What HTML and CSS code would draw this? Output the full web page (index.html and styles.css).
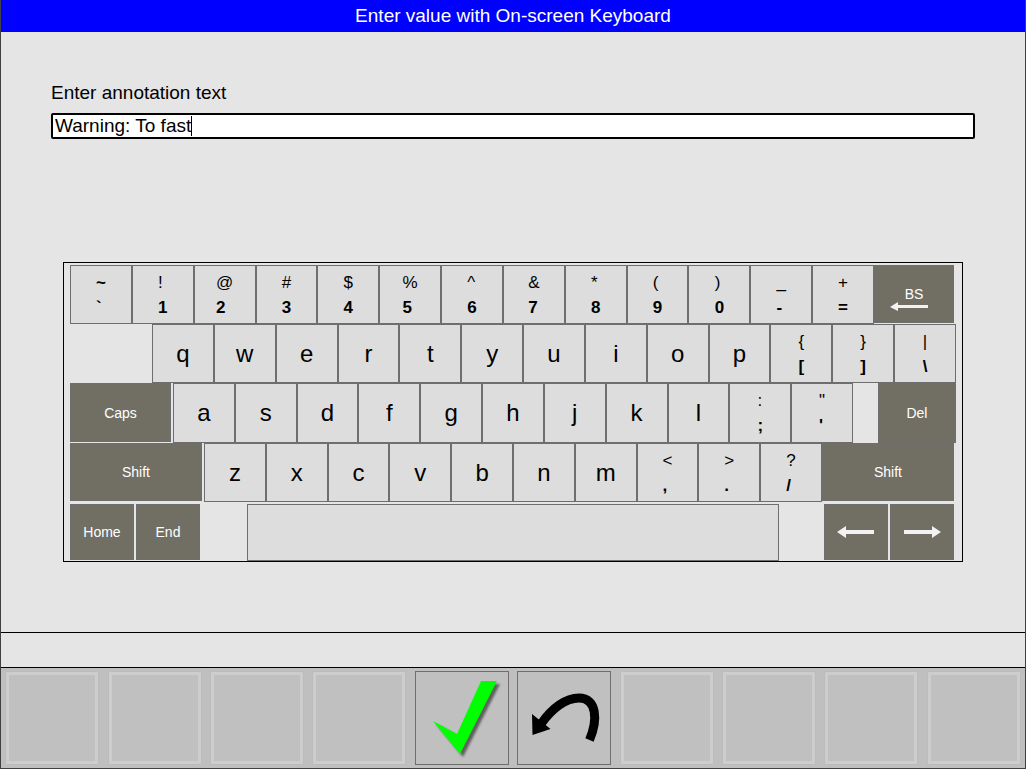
FILE: index.html
```
<!DOCTYPE html>
<html lang="en">
  <head>
    <meta charset="UTF-8" />
    <meta name="viewport" content="width=device-width, initial-scale=1.0" />
    <title>Enter value with On-screen Keyboard</title>
    <link rel="stylesheet" href="styles.css">
  </head>
  <body>
    <header class="title-bar">
      <h1>Enter value with On-screen Keyboard</h1>
    </header>

    <main>
      <label for="annotation">Enter annotation text</label>
      <div class="field">
        <input type="text" id="annotation" value="Warning: To fast" />
        <span class="caret"></span>
      </div>

      <div class="keyboard">
        <div class="row row-numbers">
          <button class="key dual"><span><b>~</b><b>`</b></span></button>
          <button class="key dual"><span><i>!</i><b>1</b></span></button>
          <button class="key dual"><span><i>@</i><b>2</b></span></button>
          <button class="key dual"><span><i>#</i><b>3</b></span></button>
          <button class="key dual"><span><i>$</i><b>4</b></span></button>
          <button class="key dual"><span><i>%</i><b>5</b></span></button>
          <button class="key dual"><span><i>^</i><b>6</b></span></button>
          <button class="key dual"><span><i>&amp;</i><b>7</b></span></button>
          <button class="key dual"><span><i>*</i><b>8</b></span></button>
          <button class="key dual"><span><i>(</i><b>9</b></span></button>
          <button class="key dual"><span><i>)</i><b>0</b></span></button>
          <button class="key dual"><span><i>_</i><b>-</b></span></button>
          <button class="key dual"><span><i>+</i><b>=</b></span></button>
          <button class="special backspace">
            BS
            <svg class="arrow" viewBox="0 0 38 10"><path d="M0 5 L8 0 V3 H38 V6 H8 V9 Z" /></svg>
          </button>
        </div>
        <div class="row row-top">
          <button class="key">q</button>
          <button class="key">w</button>
          <button class="key">e</button>
          <button class="key">r</button>
          <button class="key">t</button>
          <button class="key">y</button>
          <button class="key">u</button>
          <button class="key">i</button>
          <button class="key">o</button>
          <button class="key">p</button>
          <button class="key dual"><span><i>{</i><b>[</b></span></button>
          <button class="key dual"><span><i>}</i><b>]</b></span></button>
          <button class="key dual"><span><i>|</i><b>\</b></span></button>
        </div>
        <div class="row row-home">
          <button class="special caps">Caps</button>
          <button class="key">a</button>
          <button class="key">s</button>
          <button class="key">d</button>
          <button class="key">f</button>
          <button class="key">g</button>
          <button class="key">h</button>
          <button class="key">j</button>
          <button class="key">k</button>
          <button class="key">l</button>
          <button class="key dual"><span><i>:</i><b>;</b></span></button>
          <button class="key dual"><span><i>"</i><b>'</b></span></button>
          <button class="special del">Del</button>
        </div>
        <div class="row row-bottom">
          <button class="special shift shift-left">Shift</button>
          <button class="key">z</button>
          <button class="key">x</button>
          <button class="key">c</button>
          <button class="key">v</button>
          <button class="key">b</button>
          <button class="key">n</button>
          <button class="key">m</button>
          <button class="key dual"><span><i>&lt;</i><b>,</b></span></button>
          <button class="key dual"><span><i>&gt;</i><b>.</b></span></button>
          <button class="key dual"><span><i>?</i><b>/</b></span></button>
          <button class="special shift">Shift</button>
        </div>
        <div class="row row-space">
          <button class="special nav">Home</button>
          <button class="special nav">End</button>
          <button class="key space" aria-label="Space"></button>
          <button class="special nav" aria-label="Left">
            <svg class="arrow" viewBox="0 0 38 12"><path d="M0 6 L9 0 V4 H37 V8 H9 V12 Z" /></svg>
          </button>
          <button class="special nav" aria-label="Right">
            <svg class="arrow" viewBox="0 0 38 12"><path d="M38 6 L29 0 V4 H1 V8 H29 V12 Z" /></svg>
          </button>
        </div>
      </div>
    </main>

    <div class="status"></div>

    <footer class="toolbar">
      <button class="tool" disabled></button>
      <button class="tool" disabled></button>
      <button class="tool" disabled></button>
      <button class="tool" disabled></button>
      <button class="tool" aria-label="OK">
        <svg viewBox="0 0 92 92">
          <path class="check" d="M17 49 L41 62 L65 9 H81 L44 82 Z" />
        </svg>
      </button>
      <button class="tool" aria-label="Undo">
        <svg viewBox="0 0 92 92">
          <path class="undo-line" d="M71.500 68 C80 48 79 26 61 26 C48 26 34 36 23 52" />
          <path d="M14 42 L32.500 57 L14.500 63 Z" />
        </svg>
      </button>
      <button class="tool" disabled></button>
      <button class="tool" disabled></button>
      <button class="tool" disabled></button>
      <button class="tool" disabled></button>
    </footer>
  </body>
</html>
```
FILE: styles.css
```
:root {
  --page-bg: #e5e5e5;
  --title-bg: #0000ff;
  --key-bg: #dddddd;
  --key-border: #6e6e6e;
  --special-bg: #716f64;
  --toolbar-bg: #bfbfbf;
}

* {
  box-sizing: border-box;
}

body {
  margin: 0;
  min-height: 100vh;
  display: flex;
  flex-direction: column;
  border: 1px solid #404042;
  border-top: none;
  background: var(--page-bg);
  color: #000;
  font-family: "Liberation Sans", Arial, sans-serif;
  font-size: 19px;
}

button,
input {
  font-family: inherit;
}

.title-bar {
  background: var(--title-bg);
  color: #fff;
  text-align: center;
}

.title-bar h1 {
  margin: 0;
  font-size: 19px;
  font-weight: normal;
  line-height: 32px;
}

main {
  flex: 1;
  padding: 49px 50px 0;
}

label {
  display: block;
  line-height: 24px;
  margin-bottom: 8px;
}

.field {
  position: relative;
}

.field input {
  display: block;
  width: 100%;
  height: 26px;
  padding: 0 2px;
  border: 2px solid #000;
  border-radius: 2px;
  background: #fff;
  font-size: 19px;
}

/* text cursor, sits over the input */
.caret {
  position: absolute;
  top: 3px;
  left: 140px;
  width: 1px;
  height: 20px;
  background: #000;
}

/* Keyboard */
.keyboard {
  margin: 123px 12px 0;
  padding: 2px 6px 0;
  border: 1px solid #000;
}

.row {
  display: flex;
  height: 59px;
}

.row-numbers,
.row-bottom,
.row-space {
  padding-right: 2px;
}

.row-top {
  padding-left: 82px;
}

.row-home {
  height: 60px;
}

.row-space {
  height: 57px;
  margin-top: 2px;
  gap: 2px;
}

.key {
  flex: 1;
  min-width: 0;
  padding: 0;
  border: 1px solid var(--key-border);
  background: var(--key-bg);
  color: #000;
  font-size: 24px;
}

.dual {
  font-size: 17px;
  line-height: 25px;
}

.dual span {
  display: inline-block;
  text-align: left;
}

.dual i,
.dual b {
  display: block;
  font-style: normal;
}

.special {
  display: flex;
  flex-direction: column;
  justify-content: center;
  align-items: center;
  margin-bottom: 1px;
  padding: 0;
  border: 1px solid #6e6e6c;
  background: var(--special-bg);
  color: #fff;
  font-size: 14px;
}

.backspace {
  width: 80px;
  padding-top: 9px;
}

.caps {
  width: 101px;
  margin-right: 2px;
}

.del {
  width: 78px;
  margin-left: 25px;
  margin-bottom: 0;
}

.shift {
  width: 132px;
}

.shift-left {
  margin-right: 2px;
}

.nav {
  width: 64px;
}

.space {
  margin: 0 43px 0 45px;
}

.arrow {
  width: 38px;
  fill: #f2f2f2;
}

.backspace .arrow {
  margin-right: 10px;
}

/* Status line and bottom toolbar */
.status {
  height: 36px;
  border: solid #000;
  border-width: 1px 0;
}

.toolbar {
  display: grid;
  grid-template-columns: repeat(10, 1fr);
  justify-items: center;
  padding: 3px 0;
  background: var(--toolbar-bg);
}

.tool {
  width: 94px;
  height: 94px;
  padding: 0;
  border: 1px solid #6e6e6e;
  background: #c0c0c0;
}

.tool:disabled {
  border-color: #bcbcbc;
  box-shadow: inset 0 0 0 3px #cdcdcd;
}

.tool svg {
  display: block;
}

.check {
  fill: #00ff00;
  filter: drop-shadow(3px 3px 1px rgba(0, 0, 0, 0.5));
}

.undo-line {
  fill: none;
  stroke: #000;
  stroke-width: 9;
}
```
